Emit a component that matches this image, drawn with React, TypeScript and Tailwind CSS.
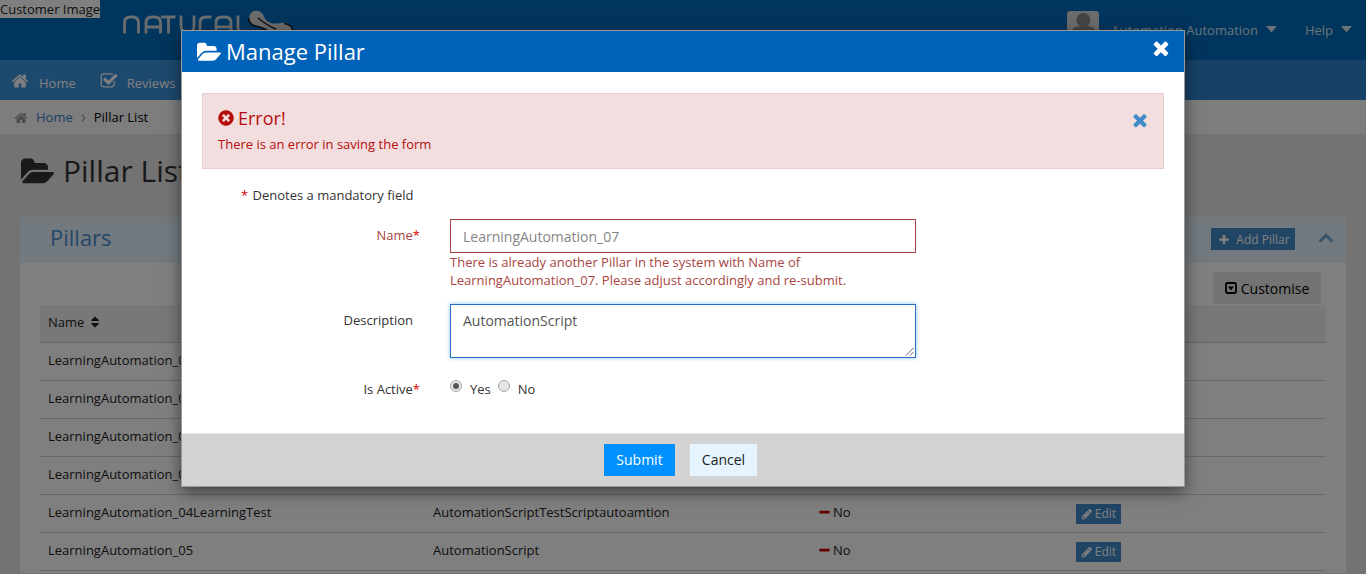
import React from "react";

const ICONS = {
  folderOpen:
    "M1879 952q0 31-31 66l-336 396q-43 51-120.5 86.5t-143.5 35.5h-1088q-34 0-60.5-13t-26.5-43q0-31 31-66l336-396q43-51 120.5-86.5t143.5-35.5h1088q34 0 60.5 13t26.5 43zm-343-344v160h-832q-94 0-197 47.5t-164 119.5l-337 396-5 6q0-4-.5-12.5t-.5-12.5v-960q0-92 66-158t158-66h320q92 0 158 66t66 158v32h544q92 0 158 66t66 158z",
  home: "M1472 992v480q0 26-19 45t-45 19h-384v-384h-256v384h-384q-26 0-45-19t-19-45v-480q0-1 .5-3t.5-3l575-474 575 474q1 2 1 6zm223-69l-62 74q-8 9-21 11h-3q-13 0-21-7l-692-577-692 577q-12 8-24 7-13-2-21-11l-62-74q-8-10-7-23.5t11-21.5l719-599q32-26 76-26t76 26l244 204v-195q0-14 9-23t23-9h192q14 0 23 9t9 23v408l219 182q10 8 11 21.5t-7 23.5z",
  checkSquare:
    "M1472 930v318q0 119-84.5 203.5t-203.5 84.5h-832q-119 0-203.5-84.5t-84.5-203.5v-832q0-119 84.5-203.5t203.5-84.5h832q63 0 117 25 15 7 18 23 3 17-9 29l-49 49q-10 10-23 10-3 0-9-2-23-6-45-6h-832q-66 0-113 47t-47 113v832q0 66 47 113t113 47h832q66 0 113-47t47-113v-254q0-13 9-22l64-64q10-10 23-10 6 0 12 3 20 8 20 29zm231-489l-814 814q-24 24-57 24t-57-24l-430-430q-24-24-24-57t24-57l110-110q24-24 57-24t57 24l263 263 647-647q24-24 57-24t57 24l110 110q24 24 24 57t-24 57z",
  times: "M1490 1322q0 40-28 68l-136 136q-28 28-68 28t-68-28l-294-294-294 294q-28 28-68 28t-68-28l-136-136q-28-28-28-68t28-68l294-294-294-294q-28-28-28-68t28-68l136-136q28-28 68-28t68 28l294 294 294-294q28-28 68-28t68 28l136 136q28 28 28 68t-28 68l-294 294 294 294q28 28 28 68z",
  timesCircle:
    "M1277 1122q0-26-19-45l-181-181 181-181q19-19 19-45 0-27-19-46l-90-90q-19-19-46-19-26 0-45 19l-181 181-181-181q-19-19-45-19-27 0-46 19l-90 90q-19 19-19 46 0 26 19 45l181 181-181 181q-19 19-19 45 0 27 19 46l90 90q19 19 46 19 26 0 45-19l181-181 181 181q19 19 45 19 27 0 46-19l90-90q19-19 19-46zm387-226q0 209-103 385.5t-279.5 279.5-385.5 103-385.5-103-279.5-279.5-103-385.5 103-385.5 279.5-279.5 385.5-103 385.5 103 279.5 279.5 103 385.5z",
  plus: "M1600 736v192q0 40-28 68t-68 28h-416v416q0 40-28 68t-68 28h-192q-40 0-68-28t-28-68v-416h-416q-40 0-68-28t-28-68v-192q0-40 28-68t68-28h416v-416q0-40 28-68t68-28h192q40 0 68 28t28 68v416h416q40 0 68 28t28 68z",
  minus: "M1600 736v192q0 40-28 68t-68 28h-1216q-40 0-68-28t-28-68v-192q0-40 28-68t68-28h1216q40 0 68 28t28 68z",
  pencil:
    "M491 1536l91-91-235-235-91 91v107h128v128h107zm523-928q0-22-22-22-10 0-17 7l-542 542q-7 7-7 17 0 22 22 22 10 0 17-7l542-542q7-7 7-17zm-54-192l416 416-832 832h-416v-416zm683 96q0 53-37 90l-166 166-416-416 166-165q36-38 90-38 53 0 91 38l235 234q37 39 37 91z",
  chevronUp:
    "M1683 1331l-166 165q-19 19-45 19t-45-19l-531-531-531 531q-19 19-45 19t-45-19l-166-165q-19-19-19-45.5t19-45.5l742-741q19-19 45-19t45 19l742 741q19 19 19 45.5t-19 45.5z",
  sort: "M1408 1088q0 26-19 45l-448 448q-19 19-45 19t-45-19l-448-448q-19-19-19-45t19-45 45-19h896q26 0 45 19t19 45zm0-384q0 26-19 45t-45 19h-896q-26 0-45-19t-19-45 19-45l448-448q19-19 45-19t45 19l448 448q19 19 19 45z",
};

function Icon({ name, className }: { name: keyof typeof ICONS; className: string }) {
  return (
    <svg viewBox={name === "folderOpen" ? "0 0 1879 1792" : "0 0 1792 1792"} className={`shrink-0 fill-current ${className}`}>
      <path d={ICONS[name]} />
    </svg>
  );
}

function Caret() {
  return (
    <svg viewBox="0 0 11 7" className="h-[7px] w-[11px] fill-current">
      <path d="M0 0h11L5.500 6.500z" />
    </svg>
  );
}

function Logo() {
  return (
    <svg viewBox="0 0 175 36" className="h-9 w-[175px]" fill="none">
      <g stroke="#d4dade" strokeWidth="2.800">
        <path d="M3.500 25.500V15q0-6 6-6h2q6 0 6 6v10.500" />
        <path d="M25 25.500V15q0-6 6-6h2.500q6 0 6 6v10.500M25 19h14" />
        <path d="M40 9h14.500M47.500 9v16.500" />
        <path d="M60 7.500V18q0 6 6 6h1q6 0 6-6V7.500" />
        <path d="M79 25.500V15q0-6 6-6h5.500" />
        <path d="M95 25.500V15q0-6 6-6h3q6 0 6 6v10.500M95 19h15" />
        <path d="M117 7.500V20q0 4 6 4.500" />
      </g>
      <path
        d="M128 10a7.500 7.500 0 0 1 14.500-2.500c1.500 4 4.500 7.500 9.500 8 5 .5 8-1.500 13-.5 5 1.500 7 6 6 12h-18c-4-5-9-7.500-15-8.500-6-.5-9-4-10-8.500z"
        fill="#d8d8d8"
      />
      <path d="M127.500 10c.5 6 4 7.500 9 8.500 7 1.500 12 6 18 9.500M137 10c5 4 10 8 18 11M163 15.500c7 1 9 4 8 9" stroke="#1c1c1c" strokeWidth="1.500" />
    </svg>
  );
}

const ROWS = [
  ["LearningAutomation_01", "AutomationScript"],
  ["LearningAutomation_02", "AutomationScript"],
  ["LearningAutomation_03", "AutomationScript"],
  ["LearningAutomation_04", "AutomationScript"],
  ["LearningAutomation_04LearningTest", "AutomationScriptTestScriptautoamtion"],
  ["LearningAutomation_05", "AutomationScript"],
];

function PageHeader() {
  return (
    <>
      <header className="flex h-[60px] items-start bg-[#006aba]">
        <div className="h-[18px] w-[100px] bg-white text-[13px] leading-[18px] whitespace-nowrap text-[#222]">Customer Image</div>
        <div className="pt-[8px] pl-[21px]">
          <Logo />
        </div>
        <div className="ml-auto flex items-start pr-[14px] text-[13px] leading-[18px] text-[#d5e5f2]">
          <svg viewBox="0 0 32 32" className="mt-[11px] h-8 w-8">
            <rect width="32" height="32" rx="3" fill="#d8d8d8" />
            <circle cx="16.500" cy="9" r="7" fill="#888" />
            <path d="M4 32V21q2-6 9-6h7q7 0 9 6v11z" fill="#888" />
          </svg>
          <span className="mt-[21px] ml-3 whitespace-nowrap">Automation Automation</span>
          <span className="mt-[26px] ml-[8px]"><Caret /></span>
          <span className="mt-[21px] ml-[28px]">Help</span>
          <span className="mt-[26px] ml-[8px]"><Caret /></span>
        </div>
      </header>
      <nav className="flex h-10 items-center bg-[#3083cf] text-[13px] text-white">
        <div className="flex h-10 w-[600px] items-center bg-[#3c92dd]">
          <Icon name="home" className="mt-[2px] ml-[11px] h-[18px] w-[18px]" />
          <span className="mt-[7px] ml-[10px]">Home</span>
          <Icon name="checkSquare" className="mt-[2px] ml-[24px] h-[18px] w-[18px]" />
          <span className="mt-[7px] ml-[9px]">Reviews</span>
        </div>
      </nav>
      <div className="flex h-[34px] items-center bg-[#fafafa] pt-[2px] text-[13px] text-black">
        <Icon name="home" className="ml-[14px] h-[14px] w-[14px] text-[#999]" />
        <span className="ml-[8px] text-[#337ecf]">Home</span>
        <svg viewBox="0 0 6 10" className="mr-[8px] ml-[8px] h-[8px] w-[5px]" fill="none" stroke="#aaa" strokeWidth="1.800">
          <path d="M1 1l4 4-4 4" />
        </svg>
        <span>Pillar List</span>
      </div>
    </>
  );
}

function PillarList() {
  return (
    <main className="px-5">
      <h1 className="flex h-[83px] items-center text-[30px] text-[#333]">
        <Icon name="folderOpen" className="-mt-[8px] ml-px h-[32px] w-[33px]" />
        <span className="-mt-[10px] ml-[9px]">Pillar List</span>
      </h1>
      <section className="bg-white pb-[2px]">
        <div className="flex h-[46px] items-center bg-[#e5f4ff] pl-[30px]">
          <h2 className="-mt-[6px] text-[22px] text-[#4a8fd2]">Pillars</h2>
          <button className="mr-[23px] -mt-[2px] ml-auto flex h-[22px] w-[84px] items-center justify-center gap-[6px] bg-[#428bca] pt-[2px] pl-[2px] text-[12px] text-white">
            <Icon name="plus" className="h-3 w-3" />
            Add Pillar
          </button>
          <Icon name="chevronUp" className="mr-[12px] -mt-[6px] h-4 w-4 text-[#76abd2]" />
        </div>
        <div className="flex h-[42px] justify-end pt-[9px] pr-[25px]">
          <button className="flex h-8 w-[108px] items-center justify-center gap-[4px] bg-[#e6e6e6] text-[14px] text-black">
            <svg viewBox="0 0 12 12" className="h-3 w-3">
              <rect x="1" y="1" width="10" height="10" rx="1.500" fill="none" stroke="currentColor" strokeWidth="1.800" />
              <path d="M3 4.500h6L6 8.500z" fill="currentColor" />
            </svg>
            Customise
          </button>
        </div>
        <div className="mx-5 text-[13px] text-[#222]">
          <div className="flex h-[38px] items-center border-b border-[#ccc] bg-[#f0f0f0] px-2 pb-[2px]">
            Name <Icon name="sort" className="ml-[4px] -mt-px h-[14px] w-[14px]" />
          </div>
          {ROWS.map(([name, description]) => (
            <div key={name} className="grid h-[38px] grid-cols-[385px_385px_258px_1fr] items-center border-b border-[#d2d2d2] px-2 pb-[2px]">
              <span>{name}</span>
              <span>{description}</span>
              <span className="flex items-center gap-[2px]">
                <Icon name="minus" className="-mt-[1px] h-[13px] w-[13px] text-[#cc0000]" />
                No
              </span>
              <button className="mt-[3px] flex h-5 w-[45px] items-center justify-center gap-[2px] bg-[#428bca] text-[12px] text-white">
                <Icon name="pencil" className="h-3 w-3" />
                Edit
              </button>
            </div>
          ))}
        </div>
      </section>
    </main>
  );
}

function Radio({ checked = false }: { checked?: boolean }) {
  return (
    <svg viewBox="0 0 12 12" className="h-3 w-3">
      <circle cx="6" cy="6" r="5.500" fill="#e6e6e6" stroke="#a6a6a6" />
      {checked && <circle cx="6" cy="6" r="3" fill="#555" />}
    </svg>
  );
}

function ManagePillarDialog() {
  return (
    <div role="dialog" className="h-[457px] w-[1004px] border border-[#999] bg-white text-[13px] text-[#333] shadow-[0_5px_15px_rgba(0,0,0,0.5)]">
      <div className="flex h-[41px] items-center bg-[#0062b8] pr-[12px] pl-[15px] text-white">
        <Icon name="folderOpen" className="mt-px h-[23px] w-6" />
        <h4 className="ml-[5px] text-[22px]">Manage Pillar</h4>
        <Icon name="times" className="-mt-[7px] ml-auto h-[22px] w-[22px]" />
      </div>
      <div className="h-[361px] px-5 pt-[21px]">
        <div className="flex h-[76px] justify-between border border-[#ebccd1] bg-[#f2dede] pt-[11px] pr-[13px] pl-[14px] text-[#b50d0d]">
          <div>
            <div className="flex h-[26px] items-center gap-[3px] text-[18px]">
              <Icon name="timesCircle" className="h-[18px] w-[18px]" />
              Error!
            </div>
            <p className="mt-[4px] ml-px leading-[18px]">There is an error in saving the form</p>
          </div>
          <Icon name="times" className="mt-[5px] h-5 w-5 text-[#428bca]" />
        </div>
        <p className="mt-[17px] ml-[39px] leading-[18px]"><span className="mr-px text-[#d00000]">*</span> Denotes a mandatory field</p>
        <div className="mt-[15px] flex h-[85px]">
          <label className="w-[218px] pt-[7px] text-right leading-[18px] text-[#a94442]">Name<span className="text-[#e00000]">*</span></label>
          <div className="ml-[30px] w-[466px]">
            <div className="flex h-[34px] items-center border border-[#a94442] px-3 text-[14px] text-[#858585]">LearningAutomation_07</div>
            <p className="leading-[18px] text-[#a94442]">There is already another Pillar in the system with Name of LearningAutomation_07. Please adjust accordingly and re-submit.</p>
          </div>
        </div>
        <div className="flex h-[54px]">
          <label className="w-[211px] pt-[7px] text-right leading-[18px]">Description</label>
          <div className="ml-[37px] flex h-[54px] w-[466px] items-end justify-between border border-[#2a6fc4] pl-3 shadow-[0_0_4px_rgba(102,175,233,0.8)]">
            <span className="self-start pt-[6px] text-[14px] leading-5 text-[#555]">AutomationScript</span>
            <svg viewBox="0 0 10 10" className="mr-px mb-px h-[9px] w-[9px]" stroke="#555" fill="none">
              <path d="M1 9.500l8.500-8.500M5.500 9.500l4-4" />
            </svg>
          </div>
        </div>
        <div className="mt-[22px] flex h-[18px] leading-[18px]">
          <label className="w-[218px] text-right">Is Active<span className="text-[#e00000]">*</span></label>
          <div className="ml-[30px] flex">
            <Radio checked />
            <span className="mr-[7px] ml-[8px]">Yes</span>
            <Radio />
            <span className="ml-[8px]">No</span>
          </div>
        </div>
      </div>
      <div className="flex h-[53px] items-center justify-center gap-[15px] border-t border-[#e5e5e5] bg-[#d3d3d3] pr-[5px] text-[14px]">
        <button className="h-8 w-[71px] bg-[#0090ff] pb-[2px] text-white">Submit</button>
        <button className="h-8 w-[67px] bg-[#e5f4ff] pb-[2px] text-[#222]">Cancel</button>
      </div>
    </div>
  );
}

export default function App() {
  return (
    <div className="relative h-[574px] w-[1366px] overflow-hidden bg-[#e6e6e6] font-['Open_Sans',sans-serif]">
      <PageHeader />
      <PillarList />
      <div className="absolute inset-0 flex items-start justify-center bg-black/50 pt-[30px]">
        <ManagePillarDialog />
      </div>
    </div>
  );
}
